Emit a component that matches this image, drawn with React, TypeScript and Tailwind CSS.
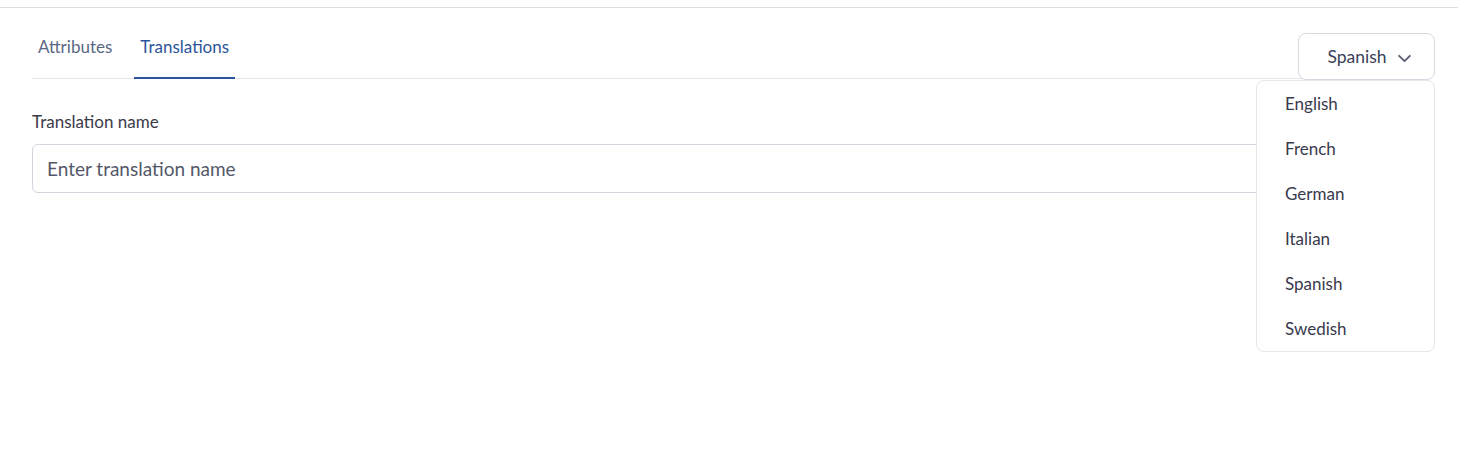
import React from "react";

const langs = ["English", "French", "German", "Italian", "Spanish", "Swedish"];

export default function App() {
  return (
    <div
      className="relative w-[1458px] h-[450px] bg-white"
      style={{ fontFamily: "Lato, 'Open Sans', sans-serif" }}
    >
      <div className="h-[8px] border-b border-[#dcdce2]" />
      <div className="px-8 pt-[27px]">
        <div className="flex gap-[16px] border-b border-[#e6e6ec]">
          <button className="px-1.5 pb-[18px] text-[17px] leading-[24px] text-[#5b6883] border-b-2 border-transparent -mb-px">
            Attributes
          </button>
          <button className="px-1.5 pb-[18px] text-[17px] leading-[24px] text-[#2b559a] border-b-2 border-[#2b559a] -mb-px">
            Translations
          </button>
        </div>
        <div className="mt-[33px]">
          <div className="text-[17px] leading-[20px] text-[#3b3a48]">Translation name</div>
          <input
            className="mt-[12px] w-full h-[49px] rounded-[6px] border border-[#d3d4de] px-[14px] text-[19px] text-[#3b3a48] placeholder:text-[#545869] outline-none"
            placeholder="Enter translation name"
          />
        </div>
      </div>

      <button className="absolute left-[1298px] top-[33px] w-[137px] h-[47px] rounded-[8px] border border-[#d6d8e2] bg-white flex items-center justify-center gap-[10px] text-[17.5px] text-[#3b3f58]">
        <span className="ml-[6px] mt-[2px]">Spanish</span>
        <svg width="15" height="15" viewBox="0 0 14 14" fill="none" className="mt-[3px]">
          <path d="M2 4.5 L7 9.5 L12 4.5" stroke="#5b6076" strokeWidth="1.8" strokeLinecap="round" strokeLinejoin="round" />
        </svg>
      </button>

      <div className="absolute left-[1256px] top-[80px] w-[179px] rounded-[8px] border border-[#e6e6ee] bg-white">
        {langs.map((l) => (
          <div key={l} className="h-[45px] flex items-center pl-[28px] text-[17px] text-[#393a4c]">
            {l}
          </div>
        ))}
      </div>
    </div>
  );
}
